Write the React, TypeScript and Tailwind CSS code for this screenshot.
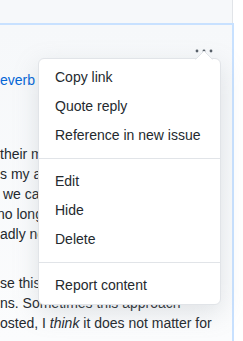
import React from "react";

const items1 = ["Copy link", "Quote reply", "Reference in new issue"];
const items2 = ["Edit", "Hide", "Delete"];

function Item({ label }: { label: string }) {
  return (
    <div className="pl-4 pr-2 py-1 text-[14px] leading-[21px] text-[#24292e] whitespace-nowrap">
      {label}
    </div>
  );
}

function Divider() {
  return <div className="my-2 h-px bg-[#e1e4e8]" />;
}

export default function App() {
  return (
    <div className="relative h-[341px] w-[243px] overflow-hidden bg-white font-['Liberation_Sans',Arial,sans-serif] text-[14px] text-[#24292e]">
      <div className="h-[23px] w-[233px] border-r border-[#e1e4e8] bg-[#f6f8fa]" />
      <div className="relative h-[318px] w-[234px] border-t-2 border-r-2 border-[#c8e1ff] bg-gradient-to-b from-[#f6f8fa] to-[#fbfcfd]">
        <div className="w-[216px] overflow-hidden pt-[45px] leading-[20px]">
          <div className="h-5 whitespace-nowrap">
            <a className="text-[#0366d6]">everb</a>
          </div>
          <div className="mt-[54px]">
            <div className="h-5 whitespace-nowrap">their methods are not</div>
            <div className="h-5 whitespace-nowrap">s my actual question</div>
            <div className="h-5 whitespace-nowrap pl-[3px]">we can not change it</div>
            <div className="-ml-[3px] h-5 whitespace-nowrap">no longer used</div>
            <div className="h-5 whitespace-nowrap">adly not here</div>
          </div>
          <div className="mt-[29px]">
            <div className="h-5 whitespace-nowrap">se this one too</div>
            <div className="h-5 whitespace-nowrap">ns. Sometimes this approach</div>
            <div className="h-5 whitespace-nowrap">
              osted, I <em>think</em> it does not matter for
            </div>
          </div>
        </div>

        <button className="absolute left-[195px] top-[24px] flex h-[4px] w-[18px] items-center">
          <svg width="18" height="4" viewBox="0 0 18 4">
            <circle cx="2" cy="2" r="1.4" fill="#586069" />
            <circle cx="9" cy="2" r="1.4" fill="#586069" />
            <circle cx="16" cy="2" r="1.4" fill="#586069" />
          </svg>
        </button>

        <div className="absolute left-[38px] top-[33px] w-[183px] rounded-md border border-[#e1e4e8] bg-white py-1 shadow-[0_8px_24px_rgba(149,157,165,0.25)]">
          <svg
            className="absolute left-[156px] top-[-9px]"
            width="18"
            height="10"
            viewBox="0 0 18 10"
          >
            <path d="M0 10 L9 1 L18 10 Z" fill="#ffffff" />
            <path d="M0.5 9.5 L9 1 L17.5 9.5" fill="none" stroke="#e1e4e8" strokeWidth="1" />
          </svg>
          {items1.map((l) => (
            <Item key={l} label={l} />
          ))}
          <Divider />
          {items2.map((l) => (
            <Item key={l} label={l} />
          ))}
          <Divider />
          <Item label="Report content" />
        </div>
      </div>
    </div>
  );
}
